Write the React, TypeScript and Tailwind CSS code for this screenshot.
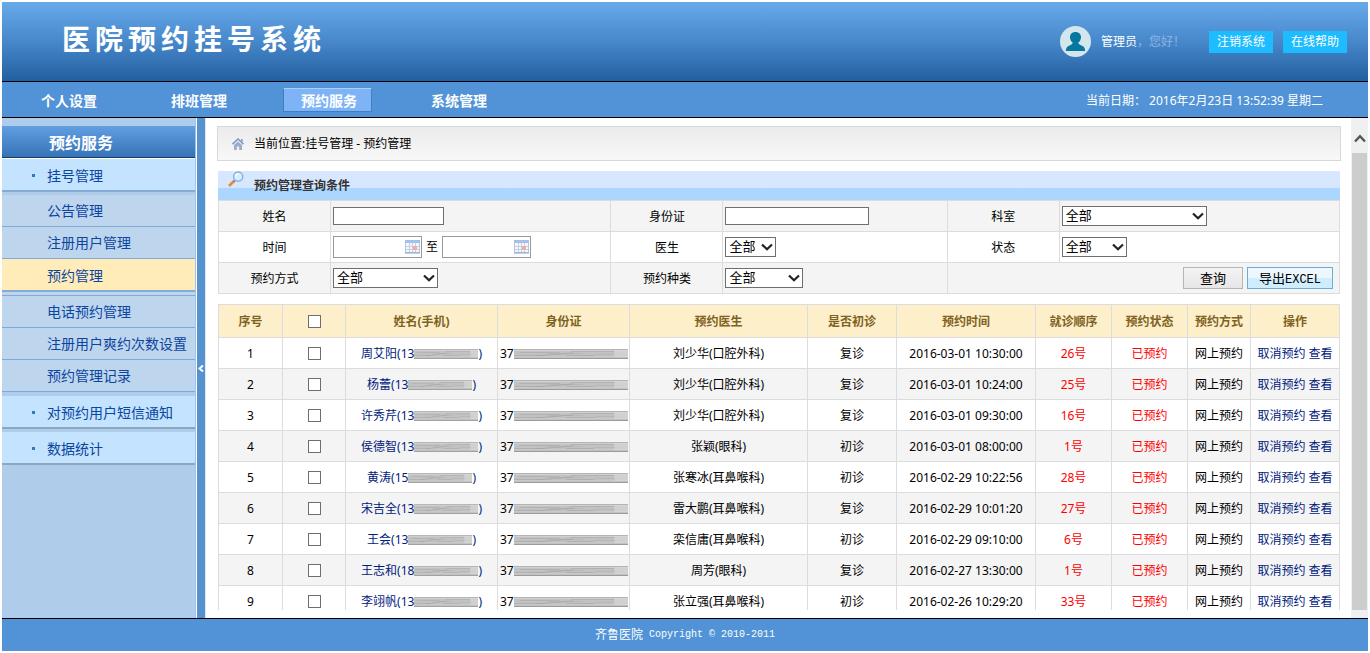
import React, { useState } from 'react';

const navItems = ['个人设置', '排班管理', '预约服务', '系统管理'];

const records = [
  { id: 1, name: '周艾阳', prefix: '13', doctor: '刘少华(口腔外科)', visit: '复诊', time: '2016-03-01 10:30:00', order: '26号' },
  { id: 2, name: '杨蕾', prefix: '13', doctor: '刘少华(口腔外科)', visit: '复诊', time: '2016-03-01 10:24:00', order: '25号' },
  { id: 3, name: '许秀芹', prefix: '13', doctor: '刘少华(口腔外科)', visit: '复诊', time: '2016-03-01 09:30:00', order: '16号' },
  { id: 4, name: '侯德智', prefix: '13', doctor: '张颖(眼科)', visit: '初诊', time: '2016-03-01 08:00:00', order: '1号' },
  { id: 5, name: '黄涛', prefix: '15', doctor: '张寒冰(耳鼻喉科)', visit: '初诊', time: '2016-02-29 10:22:56', order: '28号' },
  { id: 6, name: '宋吉全', prefix: '13', doctor: '雷大鹏(耳鼻喉科)', visit: '复诊', time: '2016-02-29 10:01:20', order: '27号' },
  { id: 7, name: '王会', prefix: '13', doctor: '栾信庸(耳鼻喉科)', visit: '初诊', time: '2016-02-29 09:10:00', order: '6号' },
  { id: 8, name: '王志和', prefix: '18', doctor: '周芳(眼科)', visit: '复诊', time: '2016-02-27 13:30:00', order: '1号' },
  { id: 9, name: '李翊帆', prefix: '13', doctor: '张立强(耳鼻喉科)', visit: '初诊', time: '2016-02-26 10:29:20', order: '33号' },
];

// Grey smear that hides the private part of a number
function Masked({ className }) {
  return (
    <svg className={`inline-block h-[10px] shrink-0 ${className}`} viewBox="0 0 100 10" preserveAspectRatio="none" aria-hidden="true">
      <rect width="100" height="10" fill="#c2c2c2" />
      <path d="M0 .5H100" stroke="#b4b4b4" />
      <path d="M0 1.5H100" stroke="#d0d0d0" />
      <path d="M5 3.5H40M50 2.5H88" stroke="#b2b2b2" />
      <path d="M30 4.5H60M70 5.5H95" stroke="#b8b8b8" />
      <path d="M0 6.5H24M46 6.5H70" stroke="#b0b0b0" />
      <path d="M18 7L52 4" stroke="#a6a6a6" strokeWidth=".8" />
      <path d="M0 7.5H100" stroke="#cbcbcb" strokeWidth=".6" />
      <path d="M0 9.5H100" stroke="#9b9b9b" />
      <path d="M88 1H100V8H88Z" fill="#dadada" opacity=".6" />
    </svg>
  );
}

function SelectBox({ id, label, className }) {
  return (
    <div className={`relative ${className}`}>
      <select id={id} aria-label={label} className="block h-5 w-full appearance-none border border-[#6e6e6e] bg-white pb-0.5 pl-[3px] text-[13px] leading-4 text-black">
        <option>全部</option>
      </select>
      <svg className="pointer-events-none absolute right-[3px] top-[6px] h-2 w-3" viewBox="0 0 12 8" aria-hidden="true">
        <path d="M1 1.5L6 6.3L11 1.5" fill="none" stroke="#222" strokeWidth="2.2" />
      </svg>
    </div>
  );
}

function DateInput({ id, label }) {
  return (
    <div className="relative w-[89px]">
      <input id={id} aria-label={label} type="text" className="block h-[22px] w-full border border-[#999] bg-white pl-1 pr-5" />
      <svg className="pointer-events-none absolute right-[2px] top-1 h-[14px] w-[15px]" viewBox="0 0 15 14" aria-hidden="true">
        <rect x=".5" y=".5" width="14" height="12" fill="#f4f8fd" stroke="#b3c6e2" />
        <rect x="0" y="0" width="15" height="3" fill="#a3c1ea" />
        <path d="M1 6.5H14M1 9.5H14M4.5 3V12M7.5 3V12M10.5 3V12" stroke="#c3d0e4" />
        <rect x="8" y="6" width="4" height="4" fill="#f3ac98" />
        <path d="M0 13H15" stroke="#8aa4cf" />
      </svg>
    </div>
  );
}

function MenuGroup({ children, light }) {
  return (
    <a
      href="#"
      className={`flex h-[33px] items-center border-b-2 bg-[#c3e3ff] pt-0.5 pl-[30px] text-sm text-[#0b45a0] ${light ? 'border-[#86abd3]' : 'border-[#8ba9bd]'}`}
    >
      <span className="mr-3 h-[3px] w-[3px] bg-[#2f78c3]" />
      {children}
    </a>
  );
}

function MenuItem({ children }) {
  return (
    <a href="#" className="flex h-8 items-center border-b border-[#7fa9d9] bg-[#bed5ee] pl-[45px] text-sm text-[#0b45a0]">
      {children}
    </a>
  );
}

function Label({ htmlFor, children }) {
  return (
    <th scope="row" className="border border-[#dcdcdc] px-0 pt-0.5 pb-0 text-center font-normal">
      <label htmlFor={htmlFor}>{children}</label>
    </th>
  );
}

export default function App() {
  const [active, setActive] = useState('预约服务');
  const [checked, setChecked] = useState([]);

  const toggle = (id) =>
    setChecked(checked.includes(id) ? checked.filter(item => item !== id) : [...checked, id]);

  const checkbox = 'block mx-auto h-[13px] w-[13px] appearance-none border border-[#6e6e6e] bg-white checked:bg-[#2f78c3]';
  const cell = 'border border-[#dcdcdc] p-0';
  const td = 'border border-[#dcdcdc] px-0 pt-0.5 pb-0 text-center whitespace-nowrap';

  return (
    <div className="flex h-screen flex-col overflow-hidden bg-white p-0.5 text-xs text-black font-['Noto_Sans','Noto_Sans_CJK_SC',sans-serif]">
      {/* Header */}
      <header className="flex h-20 shrink-0 items-center justify-between border-b border-black bg-linear-to-b from-[#68a9ea] via-[#4788cb] to-[#225f9f] pl-[60px] pr-[21px]">
        <h1 className="mb-1.5 flex gap-[5px] text-[28px] leading-9 font-bold text-white" aria-label="医院预约挂号系统">
          {Array.from('医院预约挂号系统').map(char => (
            <span key={char}>{char}</span>
          ))}
        </h1>
        <div className="flex items-center">
          <svg className="mr-2.5 h-[31px] w-[31px]" viewBox="0 0 31 31" aria-hidden="true">
            <circle cx="15.5" cy="15.5" r="15.5" fill="#d2e6ec" />
            <path d="M15.5 6C12.2 6 9.8 8.2 10 11.4C10.1 13.6 11.2 15.5 12.7 16.6C12.6 18 11.8 18.5 9.6 19.4C7 20.5 6 21.6 5.8 25H25.2C25 21.6 24 20.5 21.4 19.4C19.2 18.5 18.4 18 18.3 16.6C19.8 15.5 20.9 13.6 21 11.4C21.2 8.2 18.8 6 15.5 6Z" fill="#06779f" />
          </svg>
          <span className="mr-5 w-[88px] whitespace-nowrap text-white">
            管理员<span className="text-[#8fb5e4]">，您好！</span>
          </span>
          <button className="mr-2.5 h-[22px] w-16 bg-[#1cbcff] pt-px text-white">注销系统</button>
          <button className="h-[22px] w-16 bg-[#1cbcff] pt-px text-white">在线帮助</button>
        </div>
      </header>

      {/* Navigation */}
      <nav className="flex h-9 shrink-0 items-center justify-between border-b border-black bg-[#5193d6] pr-[45px] text-white">
        <ul className="flex">
          {navItems.map(item => (
            <li key={item} className="flex w-[130px] justify-center">
              <button
                onClick={() => setActive(item)}
                className={`h-6 w-[89px] border pt-0.5 pl-1 text-sm leading-5 font-bold ${
                  active === item ? 'border-[#3f7fc4] border-t-[#a9d0fb] bg-[#7eb4f5]' : 'border-transparent'
                }`}
              >
                {item}
              </button>
            </li>
          ))}
        </ul>
        <span className="pt-0.5">当前日期： 2016年2月23日 13:52:39 星期二</span>
      </nav>

      <div className="flex min-h-0 flex-1">
        {/* Sidebar */}
        <aside className="w-[194px] shrink-0 border-r border-[#9fc3ea] bg-[#b0cceb] pt-2">
          <h2 className="flex h-8 items-center border-b border-[#123f66] bg-linear-to-b from-[#619fe2] to-[#3674b7] pt-0.5 pl-[47px] text-base font-bold text-white">
            预约服务
          </h2>
          <div className="border-t border-white">
            <MenuGroup light>挂号管理</MenuGroup>
          </div>
          <div className="pt-[3px]">
            <MenuItem>公告管理</MenuItem>
            <MenuItem>注册用户管理</MenuItem>
            <a href="#" className="flex h-[33px] items-center border-b-2 border-[#86abd3] bg-[#ffecb8] pt-0.5 pl-[45px] text-sm text-[#0b45a0]">
              预约管理
            </a>
            <div className="h-1 border-b border-[#7fa9d9] bg-[#bed5ee]" />
            <MenuItem>电话预约管理</MenuItem>
            <MenuItem>注册用户爽约次数设置</MenuItem>
            <MenuItem>预约管理记录</MenuItem>
          </div>
          <div className="flex flex-col gap-[3px] pt-1">
            <MenuGroup>对预约用户短信通知</MenuGroup>
            <MenuGroup>数据统计</MenuGroup>
          </div>
        </aside>
        <button aria-label="收起菜单" className="flex w-2.5 shrink-0 items-center justify-center border-l border-r border-l-white border-r-[#dcebfa] bg-[#5592ce]">
          <svg className="h-[7px] w-1.5" viewBox="0 0 6 7" aria-hidden="true">
            <path d="M5 .5L1.5 3.5L5 6.5" fill="none" stroke="#fff" strokeWidth="2" />
          </svg>
        </button>

        {/* Main Content */}
        <main className="mb-2 min-w-0 flex-1 overflow-hidden pt-2 pl-[11px] pr-[10px]">
          <div className="flex h-[35px] items-center border border-[#d8d8d8] bg-linear-to-b from-[#ebebeb] to-[#f8f8f8] pl-3.5">
            <svg className="mr-2.5 h-3 w-3" viewBox="0 0 12 12" aria-hidden="true">
              <path d="M.5 6.2L6 1L11.5 6.2" fill="none" stroke="#7e9dc2" strokeWidth="1.6" />
              <path d="M9 1H10.6V4L9 2.6Z" fill="#7e9dc2" />
              <path d="M2 7L6 3.4L10 7V12H7.2V8.5H4.8V12H2Z" fill="#9aaecb" />
            </svg>
            当前位置:挂号管理 - 预约管理
          </div>

          <div className="px-px">
            {/* Search */}
            <div className="mt-2.5 flex h-[29px] bg-linear-to-b from-[#d7e7ff] from-60% to-[#abd6ff] to-60% pl-2.5">
              <svg className="h-4 w-4" viewBox="0 0 16 16" aria-hidden="true">
                <path d="M1 15L6 10" stroke="#e58b3c" strokeWidth="2.6" />
                <path d="M5.4 9.4L7 11" stroke="#8a7780" strokeWidth="1.4" />
                <circle cx="10.2" cy="5.6" r="4.6" fill="#d4effc" stroke="#82a9dc" strokeWidth="1.3" />
                <path d="M7.5 5.5C7.7 3.8 9 2.9 10.5 2.9" stroke="#fff" strokeWidth="1.2" fill="none" />
              </svg>
              <h3 className="mt-[7px] ml-2.5 leading-4 font-bold text-[#333]">预约管理查询条件</h3>
            </div>
            <table className="w-full table-fixed border-collapse">
              <colgroup>
                <col className="w-[10%]" />
                <col className="w-[25%]" />
                <col className="w-[10%]" />
                <col className="w-[20%]" />
                <col className="w-[10%]" />
                <col className="w-[25%]" />
              </colgroup>
              <tbody>
                <tr className="h-[31px] bg-[#f4f4f4]">
                  <Label htmlFor="name">姓名</Label>
                  <td className="border border-[#dcdcdc] px-0.5 py-0">
                    <input id="name" type="text" className="block h-[18px] w-[111px] border border-[#6e6e6e] bg-white px-1" />
                  </td>
                  <Label htmlFor="idcard">身份证</Label>
                  <td className="border border-[#dcdcdc] px-0.5 py-0">
                    <input id="idcard" type="text" className="block h-[18px] w-36 border border-[#6e6e6e] bg-white px-1" />
                  </td>
                  <Label htmlFor="dept">科室</Label>
                  <td className="border border-[#dcdcdc] px-0.5 py-0">
                    <SelectBox id="dept" label="科室" className="w-[145px]" />
                  </td>
                </tr>
                <tr className="h-[31px] bg-white">
                  <Label htmlFor="from">时间</Label>
                  <td className="border border-[#dcdcdc] px-0.5 py-0">
                    <div className="flex items-center gap-1">
                      <DateInput id="from" label="开始时间" />
                      至
                      <DateInput id="to" label="结束时间" />
                    </div>
                  </td>
                  <Label htmlFor="doctor">医生</Label>
                  <td className="border border-[#dcdcdc] px-0.5 py-0">
                    <SelectBox id="doctor" label="医生" className="w-[51px]" />
                  </td>
                  <Label htmlFor="status">状态</Label>
                  <td className="border border-[#dcdcdc] px-0.5 py-0">
                    <SelectBox id="status" label="状态" className="w-[65px]" />
                  </td>
                </tr>
                <tr className="h-[31px] bg-[#f4f4f4]">
                  <Label htmlFor="way">预约方式</Label>
                  <td className="border border-[#dcdcdc] px-0.5 py-0">
                    <SelectBox id="way" label="预约方式" className="w-[105px]" />
                  </td>
                  <Label htmlFor="kind">预约种类</Label>
                  <td className="border border-[#dcdcdc] px-0.5 py-0">
                    <SelectBox id="kind" label="预约种类" className="w-[78px]" />
                  </td>
                  <td colSpan={2} className="border border-[#dcdcdc] py-0 pl-0 pr-1.5">
                    <div className="flex justify-end gap-1">
                      <button className="h-[22px] w-[60px] border border-[#b5b5b5] bg-linear-to-b from-[#f4f4f4] to-[#e6e6e6] text-[13px] leading-5">
                        查询
                      </button>
                      <button className="h-[22px] w-[86px] border border-[#6aaed6] bg-linear-to-b from-[#ecf8fe] from-50% to-[#cfeefd] to-50% text-[13px] leading-5">
                        导出<span className="text-xs font-['Liberation_Mono',monospace]">EXCEL</span>
                      </button>
                    </div>
                  </td>
                </tr>
              </tbody>
            </table>

            {/* Appointments */}
            <table className="mt-2.5 w-full table-fixed border-collapse">
              <colgroup>
                <col className="w-[64px]" />
                <col className="w-[63px]" />
                <col className="w-[152px]" />
                <col className="w-[132px]" />
                <col className="w-[178px]" />
                <col className="w-[89px]" />
                <col className="w-[139px]" />
                <col className="w-[76px]" />
                <col className="w-[76px]" />
                <col className="w-[63px]" />
                <col className="w-[89px]" />
              </colgroup>
              <thead>
                <tr className="h-[33px] bg-[#fdefc9] font-bold text-[#7f621f]">
                  <th className={td}>序号</th>
                  <th className={cell}>
                    <input
                      type="checkbox"
                      aria-label="全选"
                      className={checkbox}
                      checked={checked.length === records.length}
                      onChange={(e) => setChecked(e.target.checked ? records.map(record => record.id) : [])}
                    />
                  </th>
                  <th className={td}>姓名(手机)</th>
                  <th className={td}>身份证</th>
                  <th className={td}>预约医生</th>
                  <th className={td}>是否初诊</th>
                  <th className={td}>预约时间</th>
                  <th className={td}>就诊顺序</th>
                  <th className={td}>预约状态</th>
                  <th className={td}>预约方式</th>
                  <th className={td}>操作</th>
                </tr>
              </thead>
              <tbody>
                {records.map(record => (
                  <tr key={record.id} className="h-[31px] bg-white even:bg-[#f4f4f4]">
                    <td className={td}>{record.id}</td>
                    <td className={cell}>
                      <input
                        type="checkbox"
                        aria-label={`选择${record.name}`}
                        className={checkbox}
                        checked={checked.includes(record.id)}
                        onChange={() => toggle(record.id)}
                      />
                    </td>
                    <td className={td}>
                      <a href="#" className="flex items-center justify-center text-[#00207c]">
                        {record.name}({record.prefix}
                        <Masked className="w-16" />)
                      </a>
                    </td>
                    <td className={td}>
                      <div className="flex items-center pl-0.5 pr-px">
                        37
                        <Masked className="w-[114px]" />
                      </div>
                    </td>
                    <td className={td}>{record.doctor}</td>
                    <td className={td}>{record.visit}</td>
                    <td className={td}>{record.time}</td>
                    <td className={`${td} text-[#ff0000]`}>{record.order}</td>
                    <td className={`${td} text-[#ff0000]`}>已预约</td>
                    <td className={td}>网上预约</td>
                    <td className={`${td} text-[#00207c]`}>
                      <a href="#">取消预约</a> <a href="#">查看</a>
                    </td>
                  </tr>
                ))}
              </tbody>
            </table>
          </div>
        </main>

        {/* Scrollbar */}
        <div className="flex w-[17px] shrink-0 flex-col bg-[#f0f0f0] pt-4 pb-2 pl-px pr-px">
          <svg className="mx-auto mb-2.5 h-[9px] w-3" viewBox="0 0 12 9" aria-hidden="true">
            <path d="M1 7.5L6 2.2L11 7.5" fill="none" stroke="#555" strokeWidth="2.4" />
          </svg>
          <div className="flex-1 bg-[#cdcdcd]" />
        </div>
      </div>

      {/* Footer */}
      <footer className="flex h-[33px] shrink-0 items-center justify-center border-t border-black bg-[#5193d6] text-white">
        齐鲁医院
        <span className="ml-1.5 text-[10px] font-['Liberation_Mono',monospace]">Copyright © 2010-2011</span>
      </footer>
    </div>
  );
}
